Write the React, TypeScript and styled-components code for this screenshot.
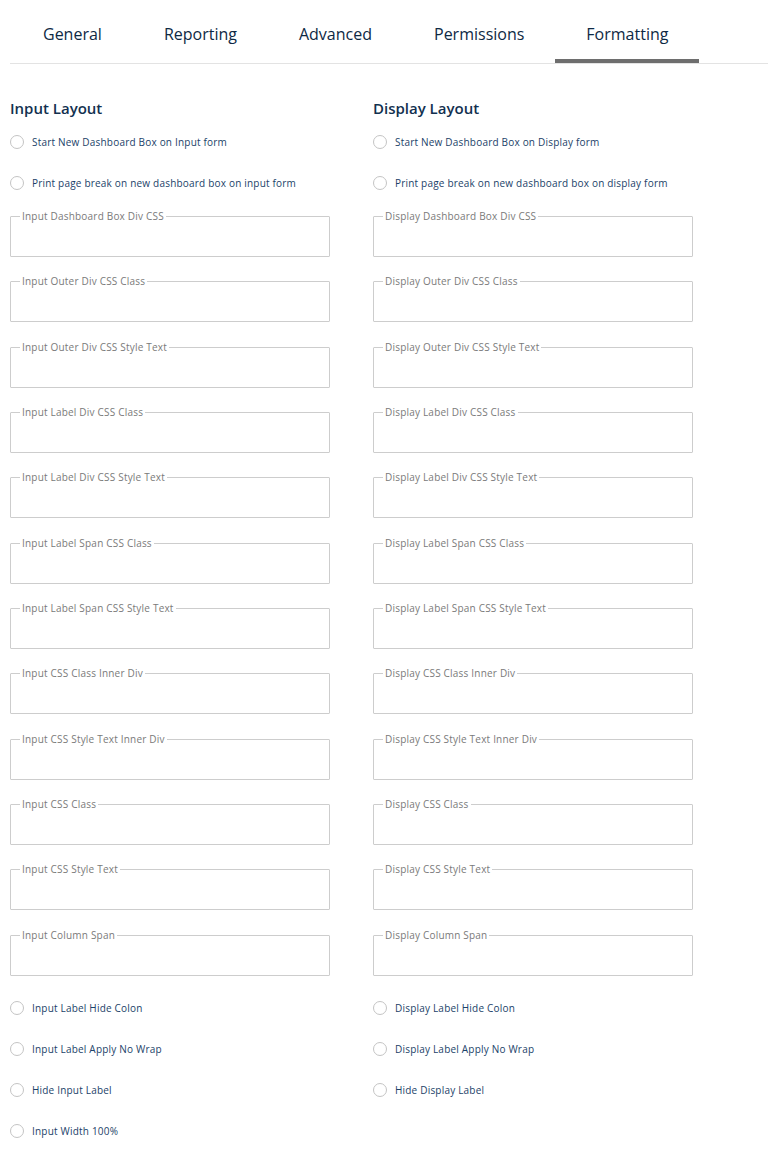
import React from "react";
import styled, { createGlobalStyle } from "styled-components";

const GlobalStyle = createGlobalStyle`
  html, body {
    margin: 0;
    padding: 0;
    background: #ffffff;
  }
  body {
    font-family: "Open Sans", "Noto Sans", Arial, sans-serif;
    -webkit-font-smoothing: antialiased;
  }
  * { box-sizing: border-box; }
`;

const Page = styled.div`
  padding: 0 0 0 10px;
  width: 768px;
`;

const TabBar = styled.div`
  display: flex;
  padding-left: 2px;
  border-bottom: 1px solid #e3e3e3;
`;

const Tab = styled.div<{ $active?: boolean }>`
  position: relative;
  height: 63px;
  padding: 5px 31px 0;
  display: flex;
  align-items: center;
  font-size: 16px;
  color: #0e2944;
  cursor: pointer;
  &::after {
    content: "";
    position: absolute;
    left: 0;
    right: 0;
    bottom: 0;
    height: 4px;
    background: ${(p) => (p.$active ? "#6e6e6e" : "transparent")};
  }
`;

const Columns = styled.div`
  display: grid;
  grid-template-columns: 363px 363px;
  margin-top: 34px;
`;

const Column = styled.div`
  display: flex;
  flex-direction: column;
`;

const Heading = styled.h2`
  margin: 0 0 3px 0;
  font-size: 15px;
  line-height: 20px;
  font-weight: 600;
  color: #12304f;
`;

const RadioGroup = styled.div<{ $top?: number }>`
  display: flex;
  flex-direction: column;
  margin-top: ${(p) => p.$top ?? 0}px;
`;

const RadioRow = styled.label`
  height: 41px;
  display: flex;
  align-items: center;
  gap: 8px;
  font-size: 10px;
  letter-spacing: 0.2px;
  color: #1b4269;
  cursor: pointer;
`;

const RadioCircle = styled.span`
  width: 14px;
  height: 14px;
  border-radius: 50%;
  border: 1px solid #c4c4c4;
  flex: none;
`;

const Fields = styled.div`
  display: flex;
  flex-direction: column;
  margin-top: 8px;
  gap: 19.33px;
`;

const FieldBox = styled.fieldset`
  margin: 0;
  width: 320px;
  height: 46px;
  padding: 0 10px;
  border: 1px solid #cdcdcd;
  border-radius: 1px;
`;

const FieldLegend = styled.legend`
  margin-left: -1px;
  padding: 0 2px;
  font-size: 10px;
  line-height: 11px;
  letter-spacing: 0.2px;
  color: #7a7a7a;
`;

const tabs = ["General", "Reporting", "Advanced", "Permissions", "Formatting"];

const fieldNames = [
  "Dashboard Box Div CSS",
  "Outer Div CSS Class",
  "Outer Div CSS Style Text",
  "Label Div CSS Class",
  "Label Div CSS Style Text",
  "Label Span CSS Class",
  "Label Span CSS Style Text",
  "CSS Class Inner Div",
  "CSS Style Text Inner Div",
  "CSS Class",
  "CSS Style Text",
  "Column Span",
];

const Radio = ({ label }: { label: string }) => (
  <RadioRow>
    <RadioCircle />
    {label}
  </RadioRow>
);

const LayoutColumn = ({
  title,
  prefix,
  topRadios,
  bottomRadios,
}: {
  title: string;
  prefix: string;
  topRadios: string[];
  bottomRadios: string[];
}) => (
  <Column>
    <Heading>{title}</Heading>
    <RadioGroup>
      {topRadios.map((r) => (
        <Radio key={r} label={r} />
      ))}
    </RadioGroup>
    <Fields>
      {fieldNames.map((f) => (
        <FieldBox key={f}>
          <FieldLegend>{`${prefix} ${f}`}</FieldLegend>
        </FieldBox>
      ))}
    </Fields>
    <RadioGroup $top={12}>
      {bottomRadios.map((r) => (
        <Radio key={r} label={r} />
      ))}
    </RadioGroup>
  </Column>
);

export default function App() {
  return (
    <Page>
      <GlobalStyle />
      <TabBar>
        {tabs.map((t) => (
          <Tab key={t} $active={t === "Formatting"}>
            {t}
          </Tab>
        ))}
      </TabBar>
      <Columns>
        <LayoutColumn
          title="Input Layout"
          prefix="Input"
          topRadios={[
            "Start New Dashboard Box on Input form",
            "Print page break on new dashboard box on input form",
          ]}
          bottomRadios={[
            "Input Label Hide Colon",
            "Input Label Apply No Wrap",
            "Hide Input Label",
            "Input Width 100%",
          ]}
        />
        <LayoutColumn
          title="Display Layout"
          prefix="Display"
          topRadios={[
            "Start New Dashboard Box on Display form",
            "Print page break on new dashboard box on display form",
          ]}
          bottomRadios={[
            "Display Label Hide Colon",
            "Display Label Apply No Wrap",
            "Hide Display Label",
          ]}
        />
      </Columns>
    </Page>
  );
}
